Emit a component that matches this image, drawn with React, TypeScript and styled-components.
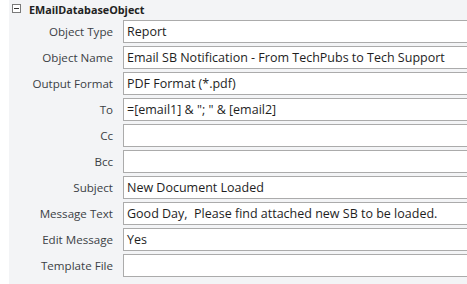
import React from "react";
import styled, { createGlobalStyle } from "styled-components";

const Global = createGlobalStyle`
  html, body { margin: 0; padding: 0; background: #ffffff; }
  body { font-family: "Segoe UI", "Open Sans", "Noto Sans", sans-serif; }
`;

const Frame = styled.div`
  width: 467px;
  height: 284px;
  display: flex;
  overflow: hidden;
  background: #ffffff;
`;

const Gutter = styled.div`
  width: 9px;
  flex: none;
  background: #ffffff;
`;

const Panel = styled.div`
  flex: 1;
  background: #f3f4f6;
  display: flex;
  flex-direction: column;
  padding-bottom: 7px;
`;

const Header = styled.div`
  height: 20px;
  display: flex;
  align-items: center;
  gap: 8px;
  padding-left: 3px;
  box-sizing: border-box;
`;

const Toggle = styled.div`
  width: 9px;
  height: 9px;
  box-sizing: border-box;
  border: 1px solid #7a7a7a;
  background: #ffffff;
  display: flex;
  align-items: center;
  justify-content: center;
  margin-top: -3px;
  &::after {
    content: "";
    width: 5px;
    height: 1px;
    background: #333333;
  }
`;

const Title = styled.span`
  font-weight: 700;
  font-size: 10.8px;
  color: #222222;
  margin-top: -2px;
`;

const Grid = styled.div`
  display: grid;
  grid-template-columns: 114px 1fr;
  row-gap: 3px;
`;

const Label = styled.div`
  height: 23px;
  line-height: 23px;
  text-align: right;
  padding-right: 10px;
  font-size: 11.6px;
  color: #3b3f45;
  white-space: nowrap;
`;

const Field = styled.div`
  height: 23px;
  box-sizing: border-box;
  border: 1px solid #ababab;
  background: #ffffff;
  margin-right: -4px;
  padding-left: 3px;
  line-height: 21px;
  font-size: 12.5px;
  color: #1e1e1e;
  white-space: pre;
  overflow: hidden;
`;

const rows: [string, string][] = [
  ["Object Type", "Report"],
  ["Object Name", "Email SB Notification - From TechPubs to Tech Support"],
  ["Output Format", "PDF Format (*.pdf)"],
  ["To", '=[email1] & "; " & [email2]'],
  ["Cc", ""],
  ["Bcc", ""],
  ["Subject", "New Document Loaded"],
  ["Message Text", "Good Day,  Please find attached new SB to be loaded."],
  ["Edit Message", "Yes"],
  ["Template File", ""],
];

export default function App() {
  return (
    <>
      <Global />
      <Frame>
        <Gutter />
        <Panel>
          <Header>
            <Toggle />
            <Title>EMailDatabaseObject</Title>
          </Header>
          <Grid>
            {rows.map(([label, value]) => (
              <React.Fragment key={label}>
                <Label>{label}</Label>
                <Field>{value}</Field>
              </React.Fragment>
            ))}
          </Grid>
        </Panel>
      </Frame>
    </>
  );
}
